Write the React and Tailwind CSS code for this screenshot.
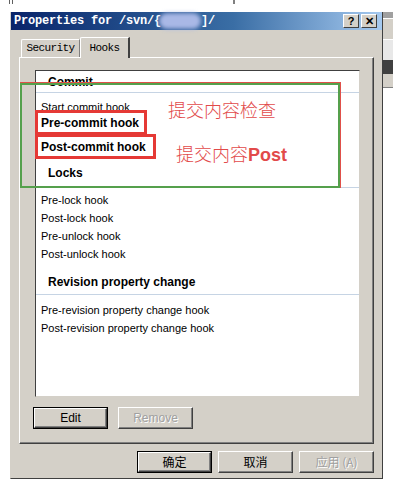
import React from 'react';

const ui = { fontFamily: '"Liberation Sans", Arial, sans-serif' };
const mono = { fontFamily: '"Liberation Mono", "Courier New", monospace' };
const cjk = { fontFamily: '"Noto Sans CJK SC", "Liberation Sans", sans-serif' };

function Section({ title, headerClass, bodyClass, items }) {
    return (
        <div>
            <div className={`flex items-end pl-[12px] border-b border-[#c6d4e4] ${headerClass}`}>
                <span className="text-[12px] font-bold text-black leading-[16px]">{title}</span>
            </div>
            <div className={bodyClass}>
                {items.map((it) => {
                    if (typeof it === 'string') {
                        return (
                            <div key={it} className="h-[18px] flex items-center pl-[5px] text-[11px] text-black">
                                {it}
                            </div>
                        );
                    }
                    // row marked with a red box in the screenshot
                    return (
                        <div key={it.label} className="h-[18px] relative">
                            <div className={`absolute -left-px z-10 h-[25px] border-[3px] border-[#e53935] bg-white flex items-center pl-[3px] ${it.box}`}>
                                <span className="text-[12px] font-bold text-black">{it.label}</span>
                            </div>
                        </div>
                    );
                })}
            </div>
        </div>
    );
}

function WinButton({ label, disabled, isDefault, font = ui }) {
    return (
        <div
            className={`h-[22px] w-[75px] bg-[#d4d0c8] flex items-center justify-center ${isDefault ? 'border border-black' : ''}`}
            style={font}
        >
            <div className="w-full h-full border-t border-l border-white border-r border-b border-r-[#404040] border-b-[#404040] flex items-center justify-center shadow-[inset_-1px_-1px_0_#808080]">
                <span
                    className={`text-[12px] ${disabled ? 'text-[#a0a0a0] [text-shadow:1px_1px_0_#ffffff]' : 'text-black'}`}
                >
                    {label}
                </span>
            </div>
        </div>
    );
}

function TitleBtn({ children }) {
    return (
        <div className="w-[16px] h-[14px] bg-[#d4d0c8] border-t border-l border-white border-r border-b border-r-[#404040] border-b-[#404040] flex items-center justify-center text-[11px] font-bold text-black leading-none" style={ui}>
            {children}
        </div>
    );
}

export default function App() {
    return (
        <div className="w-[420px] h-[481px] bg-white overflow-hidden relative" style={ui}>
            {/* bits of windows behind */}
            <div className="h-[12px] relative">
                <div className="absolute left-[9px] top-0 w-[4px] h-[4px] border-x border-[#606060]" />
                <div className="absolute left-[233px] top-0 w-[2px] h-[4px] bg-[#808080]" />
            </div>
            <div className="flex pl-[10px]">
                {/* dialog */}
                <div className="w-[373px] h-[467px] flex flex-col bg-[#d4d0c8] border-r border-b border-[#404040] border-l border-l-[#d4d0c8]">
                    {/* title bar */}
                    <div className="h-[18px] flex items-center bg-gradient-to-r from-[#0a246a] via-[#3a6ea5] via-60% to-[#a6caf0] pl-[3px] pr-[5px]">
                        <div className="flex items-center text-white text-[12px] font-bold tracking-[-0.2px] flex-1" style={mono}>
                            <span>Properties for /svn/{'{'}</span>
                            <span className="w-[42px] h-[16px] rounded-full bg-[#a9b8e6] blur-[2px] -ml-[2px]" />
                            <span>]/</span>
                        </div>
                        <div className="flex gap-[2px]">
                            <TitleBtn>?</TitleBtn>
                            <TitleBtn>✕</TitleBtn>
                        </div>
                    </div>

                    {/* body */}
                    <div className="flex-1 flex flex-col px-[8px] pt-[7px]">
                        {/* tabs */}
                        <div className="flex items-end h-[20px] pl-[2px]" style={mono}>
                            <div className="h-[18px] w-[59px] border-t border-l border-white border-r border-r-[#808080] rounded-tl-[2px] flex items-center justify-center text-[11px] tracking-[-0.6px] text-black">
                                Security
                            </div>
                            <div className="h-[21px] w-[50px] -mb-px relative z-10 bg-[#d4d0c8] border-t border-l border-white border-r-2 border-r-[#404040] rounded-tl-[2px] flex items-start pt-[2px] justify-center text-[11px] tracking-[-0.6px] text-black">
                                Hooks
                            </div>
                        </div>

                        {/* tab panel */}
                        <div className="h-[387px] border-t border-l border-white border-r border-b border-r-[#404040] border-b-[#404040] shadow-[inset_-1px_-1px_0_#808080] pl-[15px] pr-[13px] pt-[12px] flex flex-col">
                            {/* list box */}
                            <div className="h-[327px] bg-white border-t border-l border-[#404040] border-r border-b border-r-[#d4d0c8] border-b-[#d4d0c8]">
                                <Section
                                    title="Commit"
                                    headerClass="h-[22px] pb-[2px]"
                                    bodyClass="pt-[5px]"
                                    items={[
                                        'Start commit hook',
                                        { label: 'Pre-commit hook', box: 'top-[-6px] w-[112px]' },
                                        { label: 'Post-commit hook', box: 'top-0 w-[121px]' },
                                    ]}
                                />
                                <Section
                                    title="Locks"
                                    headerClass="h-[36px] pb-[6px]"
                                    bodyClass="pt-[3px]"
                                    items={['Pre-lock hook', 'Post-lock hook', 'Pre-unlock hook', 'Post-unlock hook']}
                                />
                                <Section
                                    title="Revision property change"
                                    headerClass="h-[32px] pb-[4px]"
                                    bodyClass="pt-[6px]"
                                    items={['Pre-revision property change hook', 'Post-revision property change hook']}
                                />
                            </div>
                            <div className="flex gap-[10px] mt-[10px] -ml-[2px]">
                                <WinButton label="Edit" isDefault />
                                <WinButton label="Remove" disabled />
                            </div>
                        </div>

                        {/* dialog buttons */}
                        <div className="flex justify-end gap-[6px] mt-[7px]">
                            <WinButton label="确定" isDefault font={cjk} />
                            <WinButton label="取消" font={cjk} />
                            <WinButton label="应用 (A)" disabled font={cjk} />
                        </div>
                    </div>
                </div>

                {/* edge of window behind */}
                <div className="w-[10px] flex flex-col">
                    <div className="h-[6px] bg-[#a0a0a0]" />
                    <div className="h-[22px] bg-[#d4d0c8] border-y border-white" />
                    <div className="h-[20px] bg-[#e8e8e8]" />
                    <div className="h-[14px] bg-[#404040]" />
                    <div className="h-[14px] bg-[#d4d0c8] border-b border-[#808080]" />
                </div>
            </div>

            {/* annotation frames and notes drawn over the screenshot */}
            <div className="absolute left-[20px] top-[82px] w-[321px] h-[106px] border-t border-r border-[#e0504a] pointer-events-none" />
            <div className="absolute left-[20px] top-[83px] w-[320px] h-[105px] border-2 border-[#55a04c] pointer-events-none" />
            <div className="absolute left-[168px] top-[97px] text-[18px] font-light text-[#e24a4a] leading-[24px]" style={cjk}>
                提交内容检查
            </div>
            <div className="absolute left-[176px] top-[141px] text-[18px] font-light text-[#e24a4a] leading-[24px]" style={cjk}>
                提交内容<span className="font-bold" style={ui}>Post</span>
            </div>
        </div>
    );
}
